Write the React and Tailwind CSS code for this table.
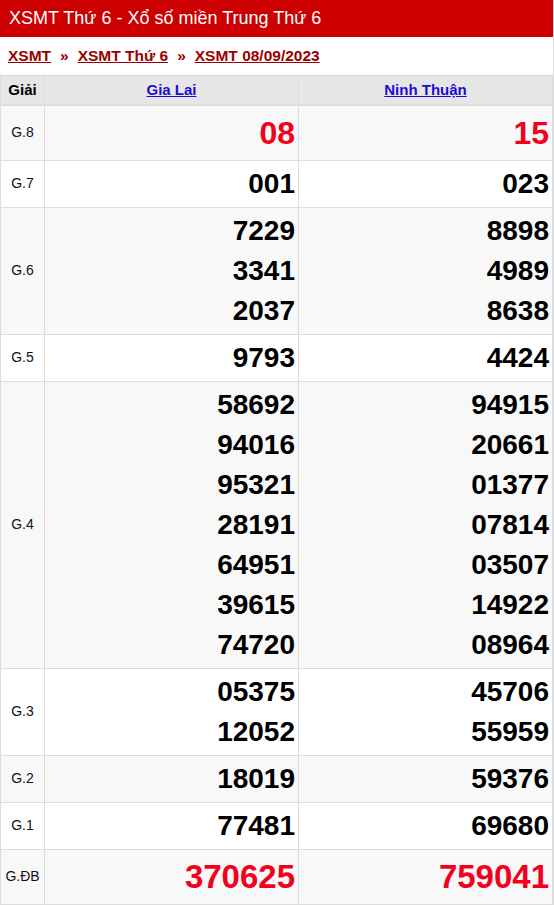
const rows = [
  { label: 'G.8', a: ['08'], b: ['15'], kind: 'g8', bg: 'bg-[#f8f8f8]' },
  { label: 'G.7', a: ['001'], b: ['023'], bg: 'bg-white' },
  { label: 'G.6', a: ['7229', '3341', '2037'], b: ['8898', '4989', '8638'], bg: 'bg-[#f8f8f8]' },
  { label: 'G.5', a: ['9793'], b: ['4424'], bg: 'bg-white' },
  {
    label: 'G.4',
    a: ['58692', '94016', '95321', '28191', '64951', '39615', '74720'],
    b: ['94915', '20661', '01377', '07814', '03507', '14922', '08964'],
    bg: 'bg-[#f8f8f8]',
  },
  { label: 'G.3', a: ['05375', '12052'], b: ['45706', '55959'], bg: 'bg-white' },
  { label: 'G.2', a: ['18019'], b: ['59376'], bg: 'bg-[#f8f8f8]' },
  { label: 'G.1', a: ['77481'], b: ['69680'], bg: 'bg-white' },
  { label: 'G.ĐB', a: ['370625'], b: ['759041'], kind: 'db', bg: 'bg-[#f8f8f8]' },
];

function Nums({ list, kind }) {
  let cls = 'text-[28px] leading-[40px] text-black';
  if (kind === 'g8') cls = 'text-[32px] leading-[48px] text-[#f2001c]';
  if (kind === 'db') cls = 'text-[33px] leading-[48px] text-[#f2001c]';
  return (
    <td className="border border-[#dcdcdc] px-[3px] py-[3px] text-right align-middle">
      {list.map((n) => (
        <div key={n} className={`font-bold ${cls}`}>{n}</div>
      ))}
    </td>
  );
}

export default function App() {
  return (
    <div className="w-[554px] border-r border-[#dcdcdc] bg-white font-['Liberation_Sans',Arial,sans-serif]">
      {/* Title */}
      <div className="flex h-[37px] items-center bg-[#cc0000] px-[9px] text-[18px] text-white">
        XSMT Thứ 6 - Xổ số miền Trung Thứ 6
      </div>

      {/* Breadcrumb */}
      <div className="flex h-[38px] items-center gap-[9px] px-[8px] text-[15.5px] font-bold">
        <a href="#" className="text-[#990000] underline">XSMT</a>
        <span className="text-[#990000]">»</span>
        <a href="#" className="text-[#990000] underline">XSMT Thứ 6</a>
        <span className="text-[#990000]">»</span>
        <a href="#" className="text-[#990000] underline">XSMT 08/09/2023</a>
      </div>

      <table className="w-[553px] table-fixed border-collapse">
        <colgroup>
          <col className="w-[44px]" />
          <col className="w-[254px]" />
          <col />
        </colgroup>
        <thead>
          <tr className="h-[29px] bg-[#e6e6e6] text-[15px] font-bold">
            <th className="border border-b-2 border-[#dcdcdc] text-black">Giải</th>
            <th className="border border-b-2 border-[#dcdcdc]">
              <a href="#" className="text-[#1a0dd8] underline">Gia Lai</a>
            </th>
            <th className="border border-b-2 border-[#dcdcdc]">
              <a href="#" className="text-[#1a0dd8] underline">Ninh Thuận</a>
            </th>
          </tr>
        </thead>
        <tbody>
          {rows.map((r) => (
            <tr key={r.label} className={r.bg}>
              <td className="border border-[#dcdcdc] text-center align-middle text-[14px] text-[#111]">
                {r.label}
              </td>
              <Nums list={r.a} kind={r.kind} />
              <Nums list={r.b} kind={r.kind} />
            </tr>
          ))}
        </tbody>
      </table>
    </div>
  );
}
